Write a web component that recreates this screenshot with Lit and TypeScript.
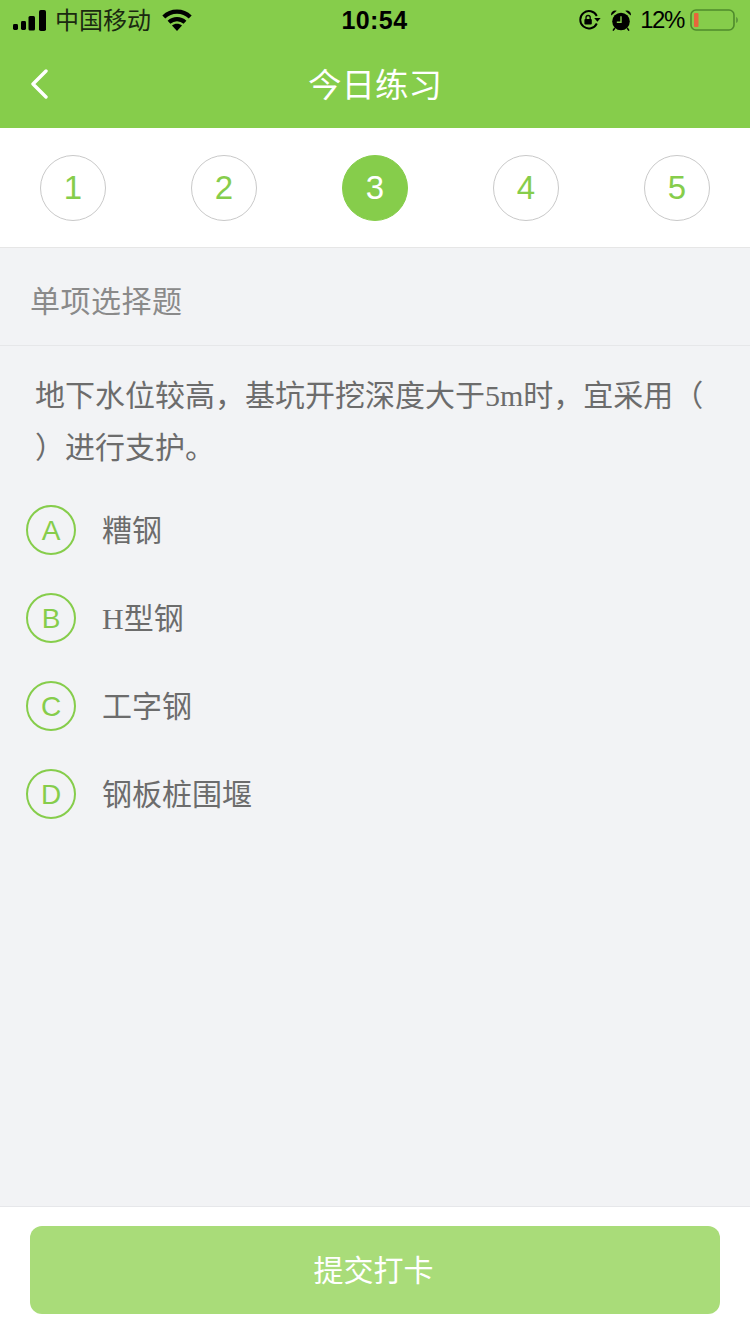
import { LitElement, html, css, svg } from "lit";
import { customElement } from "lit/decorators.js";

const options = [
  ["A", "糟钢"],
  ["B", "H型钢"],
  ["C", "工字钢"],
  ["D", "钢板桩围堰"],
];
const steps = [1, 2, 3, 4, 5];

const signal = svg`<svg width="33" height="21" viewBox="0 0 33 21" fill="#000">
  <rect x="0" y="14" width="5" height="6" rx="1.400"/><rect x="8" y="11" width="5" height="9" rx="1.400"/>
  <rect x="15.500" y="6" width="6.500" height="14.500" rx="1.500"/><rect x="26" y="0" width="7" height="21" rx="1.800"/></svg>`;
const wifi = svg`<svg width="30" height="22" viewBox="0 0 30 22" fill="none" stroke="#000" stroke-width="4.200">
  <path d="M1.800 8C9.200 .8 20.800 .8 28.200 8"/><path d="M7 13.200c4.600-4.200 11.400-4.200 16 0"/>
  <path d="M15 22l-5-5.600c2.800-2.300 7.200-2.300 10 0z" fill="#000" stroke="none"/></svg>`;
const lock = svg`<svg width="22" height="20" viewBox="0 0 22 20" fill="none">
  <path d="M17.800 13.500A8.700 8.700 0 1 1 17.800 6" stroke="#000" stroke-width="1.900"/>
  <path d="M15.200 8h6.400l-3.200 3.800z" fill="#000"/>
  <rect x="5.400" y="9" width="7.400" height="5.600" rx="1" fill="#000"/>
  <path d="M7 9.400V7.600a2.100 2.100 0 0 1 4.200 0v1.800" stroke="#000" stroke-width="1.300"/></svg>`;
const alarm = svg`<svg width="20" height="21" viewBox="0 0 20 21">
  <circle cx="10" cy="11.500" r="8.800" fill="#000"/>
  <path d="M.3 5.600A4 4 0 0 1 5.800 .8zM19.700 5.600A4 4 0 0 0 14.200 .8z" fill="#000"/>
  <path d="M3.800 18l-1.800 2.600M16.200 18l1.800 2.600" stroke="#000" stroke-width="1.500"/>
  <path d="M10 6.200V12.300H5.800" stroke="#86cd4b" stroke-width="1.400" fill="none"/></svg>`;
const battery = svg`<svg width="48" height="24" viewBox="0 0 48 24">
  <rect x="1" y="2" width="43" height="20" rx="5" fill="none" stroke="#4f8a2c" stroke-width="1.600"/>
  <rect x="4" y="5" width="4.500" height="14" rx="1" fill="#e8663c"/>
  <path d="M46 9c1.400.5 2 1.500 2 3s-.6 2.500-2 3z" fill="#5f9a3c"/></svg>`;
const chevron = svg`<svg width="18" height="30" viewBox="0 0 18 30" fill="none">
  <path d="M16 2L3 15l13 13" stroke="#fff" stroke-width="3.400" stroke-linecap="round" stroke-linejoin="round"/></svg>`;

@customElement("app-root")
export class AppRoot extends LitElement {
  static styles = css`
    :host {
      display: flex;
      flex-direction: column;
      height: 1334px;
      background: #f2f3f5;
      font-family: "Liberation Serif", "Noto Sans CJK SC", serif;
      color: #666;
    }
    .head {
      background: #86cd4b;
    }
    .status {
      height: 40px;
      display: grid;
      grid-template-columns: 1fr auto 1fr;
      align-items: center;
      padding: 0 12px 0 13px;
      color: #000;
      font-family: "Liberation Sans", "Noto Sans CJK SC", sans-serif;
      font-size: 24px;
    }
    .left,
    .right {
      display: flex;
      align-items: center;
    }
    .left {
      gap: 9px;
    }
    .carrier {
      line-height: 24px;
      position: relative;
      top: 1px;
      margin-right: 2px;
      color: #1a2a10;
    }
    .right {
      justify-content: flex-end;
    }
    .lockic {
      display: flex;
      margin-right: 10px;
    }
    .alarmic {
      display: flex;
      margin-right: 9px;
    }
    .pct {
      font-size: 24px;
      letter-spacing: -1.400px;
      margin-right: 6px;
    }
    .batt {
      display: flex;
    }
    .time {
      font-weight: 700;
      font-size: 25px;
      letter-spacing: 0.4px;
      margin-left: -2px;
    }
    .nav {
      height: 88px;
      box-sizing: border-box;
      position: relative;
      display: flex;
      align-items: center;
      justify-content: center;
      color: #fff;
      font-family: "Noto Sans CJK SC", sans-serif;
      font-size: 33.500px;
      padding-bottom: 4px;
    }
    .back {
      position: absolute;
      left: 30px;
      top: 29px;
      display: flex;
    }
    .steps {
      display: flex;
      justify-content: space-between;
      padding: 27px 40px 26px;
      background: #fff;
      border-bottom: 1px solid #e6e6e6;
    }
    .step {
      box-sizing: border-box;
      width: 66px;
      height: 66px;
      border-radius: 50%;
      border: 1px solid #c9c9c9;
      display: flex;
      align-items: center;
      justify-content: center;
      color: #86cd4b;
      font-family: "Liberation Sans", sans-serif;
      font-size: 33px;
    }
    .step.on {
      background: #86cd4b;
      border-color: #86cd4b;
      color: #fff;
    }
    .kind {
      height: 98px;
      box-sizing: border-box;
      padding: 4px 0 0 30px;
      display: flex;
      align-items: center;
      border-bottom: 1px solid #e6e7e9;
      font-size: 30px;
      letter-spacing: 0.5px;
      color: #8a8a8a;
    }
    .main {
      flex: 1;
    }
    .question {
      margin: 0;
      padding: 24px 35px 0;
      font-size: 30px;
      line-height: 52px;
      color: #6c6c6c;
      font-weight: 400;
    }
    .opts {
      list-style: none;
      margin: 0;
      padding: 31px 0 0 26px;
      display: flex;
      flex-direction: column;
      gap: 38px;
    }
    .opt {
      display: flex;
      align-items: center;
      gap: 26px;
      font-size: 30px;
      color: #6c6c6c;
      height: 50px;
    }
    .label {
      position: relative;
      top: -2px;
    }
    .mark {
      box-sizing: border-box;
      width: 50px;
      height: 50px;
      border-radius: 50%;
      border: 2px solid #86cd4b;
      display: flex;
      align-items: center;
      justify-content: center;
      padding-top: 2px;
      color: #86cd4b;
      font-family: "Liberation Sans", sans-serif;
      font-size: 28px;
    }
    .foot {
      height: 128px;
      box-sizing: border-box;
      background: #fff;
      border-top: 1px solid #e6e7ea;
      padding: 19px 30px 20px;
    }
    .submit {
      display: block;
      width: 100%;
      height: 88px;
      border: 0;
      border-radius: 12px;
      background: #a9dc79;
      color: #fff;
      font-family: "Noto Sans CJK SC", sans-serif;
      font-size: 30px;
      padding: 0 3px 4px 0;
    }
  `;

  render() {
    return html`
      <header class="head">
        <div class="status">
          <div class="left">${signal}<span class="carrier">中国移动</span>${wifi}</div>
          <div class="time">10:54</div>
          <div class="right">
            <span class="lockic">${lock}</span><span class="alarmic">${alarm}</span><span class="pct">12%</span
            ><span class="batt">${battery}</span>
          </div>
        </div>
        <div class="nav">
          <span class="back">${chevron}</span>
          <span>今日练习</span>
        </div>
      </header>
      <div class="steps">
        ${steps.map((n) => html`<div class="step ${n === 3 ? "on" : ""}">${n}</div>`)}
      </div>
      <div class="kind">单项选择题</div>
      <main class="main">
        <h2 class="question">地下水位较高，基坑开挖深度大于5m时，宜采用（<br />）进行支护。</h2>
        <ul class="opts">
          ${options.map(
            ([k, t]) => html`<li class="opt"><span class="mark">${k}</span><span class="label">${t}</span></li>`
          )}
        </ul>
      </main>
      <footer class="foot"><button class="submit">提交打卡</button></footer>
    `;
  }
}
